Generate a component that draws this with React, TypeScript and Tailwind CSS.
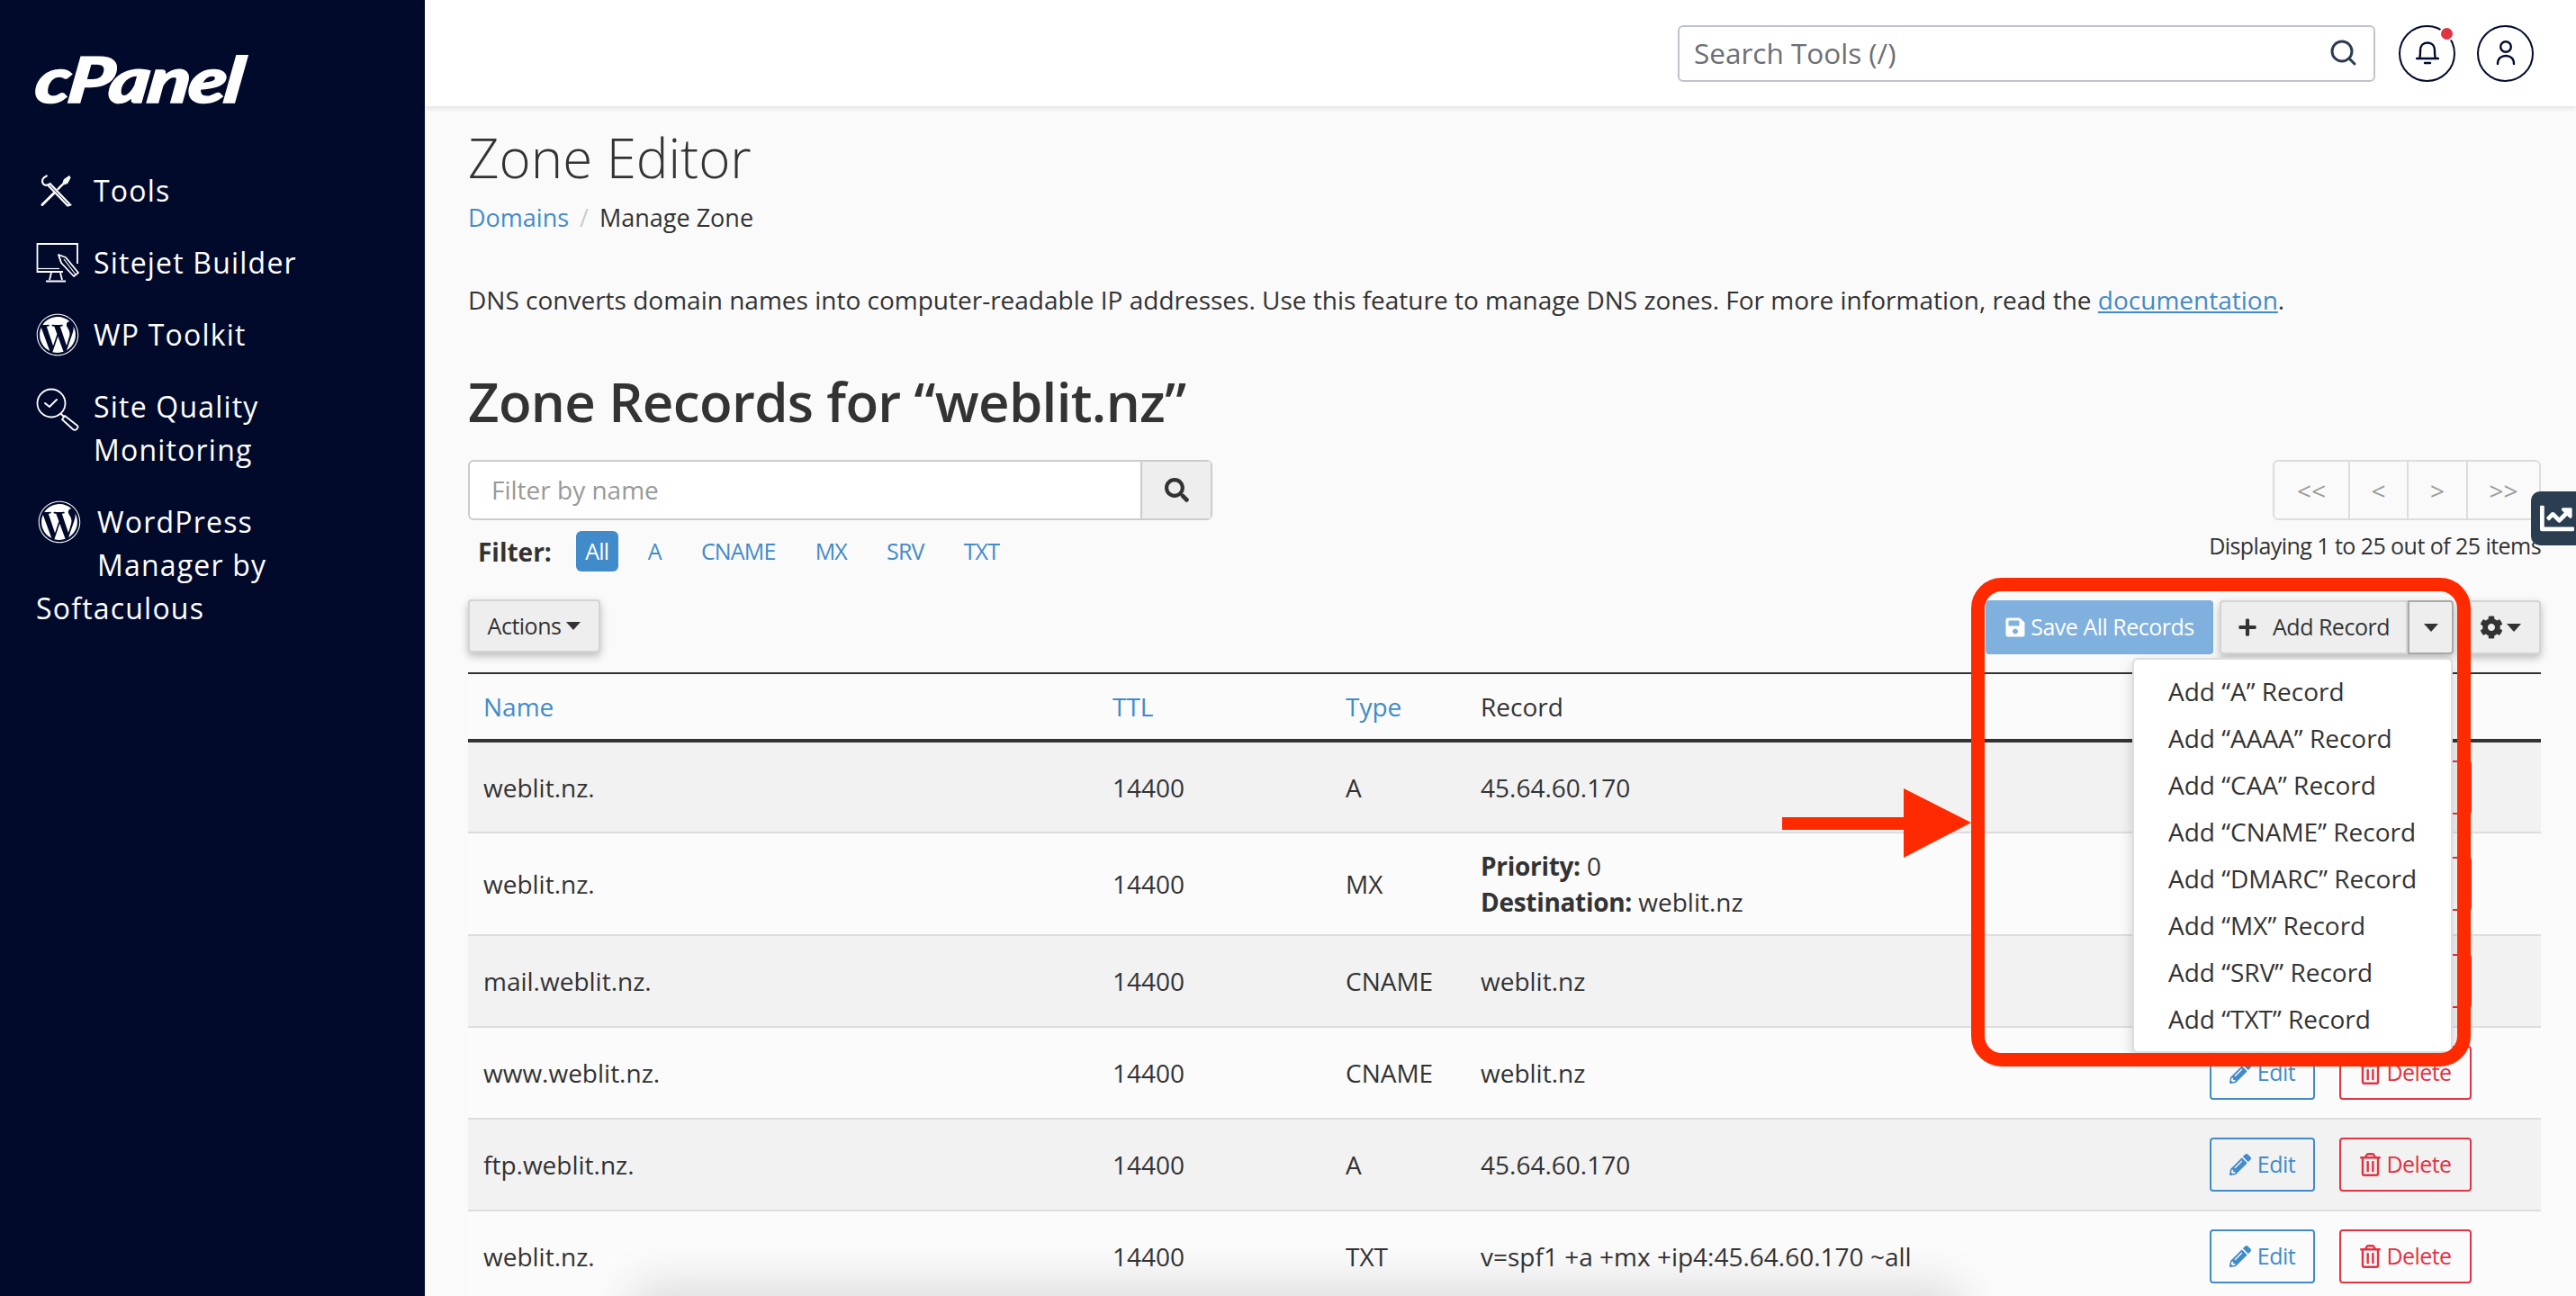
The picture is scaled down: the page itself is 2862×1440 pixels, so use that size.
import { FaChartLine, FaCog, FaPencilAlt, FaPlus, FaRegTrashAlt, FaSave, FaSearch, FaWordpress } from "react-icons/fa"

const records = [
  { name: "weblit.nz.", type: "A", value: "45.64.60.170", rowClass: "h-[101px] bg-[#f2f2f2]" },
  { name: "weblit.nz.", type: "MX", rowClass: "h-[114px] bg-[#fbfbfb]" },
  { name: "mail.weblit.nz.", type: "CNAME", value: "weblit.nz", rowClass: "h-[102px] bg-[#f2f2f2]" },
  { name: "www.weblit.nz.", type: "CNAME", value: "weblit.nz", rowClass: "h-[102px] bg-[#fbfbfb]" },
  { name: "ftp.weblit.nz.", type: "A", value: "45.64.60.170", rowClass: "h-[102px] bg-[#f2f2f2]" },
  { name: "weblit.nz.", type: "TXT", value: "v=spf1 +a +mx +ip4:45.64.60.170 ~all", rowClass: "h-[102px] bg-[#fbfbfb]" },
]

const addOptions = ["A", "AAAA", "CAA", "CNAME", "DMARC", "MX", "SRV", "TXT"]
const filters = ["A", "CNAME", "MX", "SRV", "TXT"]

function Caret() {
  return <span className="h-0 w-0 border-x-[8px] border-t-[9px] border-x-transparent border-t-[#333]" />
}

function ToolsIcon() {
  return (
    <svg viewBox="0 0 36 36" className="h-[36px] w-[36px]" fill="none" stroke="white" strokeWidth="2.6" strokeLinecap="round">
      <path d="M7 1 C2 3 1 7 3 10 C5 12 8 12 11 10 L34 34 L31 35 L9 12" strokeWidth="2.2" />
      <path d="M2 34 L15 21" strokeWidth="3" />
      <path d="M20 16 L25 11" strokeWidth="2.4" />
      <path d="M25 11 L27 5 L33 1 L34 3 L31 9 Z" fill="white" strokeWidth="1" />
    </svg>
  )
}

function MonitorIcon() {
  return (
    <svg viewBox="0 0 48 46" className="h-[46px] w-[48px]" fill="none" stroke="white" strokeWidth="1.8">
      <path d="M46 24 V2 H1.5 V33 H30" />
      <path d="M1.5 29.5 H26" strokeWidth="1.2" />
      <path d="M17 34 L15 42 M27 34 L29 42 M11 43.5 H33" />
      <path d="M25 14 L33 17 L47 34 L42 38 L28 23 Z" strokeLinejoin="round" />
      <path d="M25 14 L28 23 M31 19 L44 36" strokeWidth="1.2" />
    </svg>
  )
}

function QualityIcon() {
  return (
    <svg viewBox="0 0 48 48" className="h-[48px] w-[48px]" fill="none" stroke="white" strokeWidth="1.8" strokeLinecap="round">
      <circle cx="17" cy="17" r="15.5" />
      <path d="M10 17 L15 21 L23 13" strokeWidth="2" />
      <path d="M28 29 L31 32" strokeWidth="2" />
      <path d="M32 31 L46 42 Q47.5 44 45 46 Q43 47.5 41 46 L29 35 Z" strokeLinejoin="round" />
    </svg>
  )
}

function BellIcon() {
  return (
    <svg viewBox="0 0 26 26" className="h-[26px] w-[26px]" fill="none" stroke="#020a2c" strokeWidth="2.4" strokeLinecap="round">
      <path d="M1 19 H25 M4 19 C5 17 5 15 5 10 C5 5 8 1.5 13 1.5 C18 1.5 21 5 21 10 C21 15 21 17 22 19" />
      <path d="M10 24 H16" />
    </svg>
  )
}

function PersonIcon() {
  return (
    <svg viewBox="0 0 22 28" className="h-[28px] w-[22px]" fill="none" stroke="#020a2c" strokeWidth="2.4" strokeLinecap="round">
      <circle cx="11" cy="7" r="5.8" />
      <path d="M2 26 C2 20 6 17 11 17 C16 17 20 20 20 26" />
    </svg>
  )
}

function Sidebar() {
  const itemClass = "flex items-center"
  return (
    <aside className="w-[472px] shrink-0 bg-[#020a2c] pl-[40px] text-[32px] leading-[48px] tracking-[1.2px] text-white">
      <div className="mt-[52px] h-[76px] origin-left -skew-x-6 scale-x-[1.24] font-['Lato',sans-serif] text-[70px] leading-[70px] font-black tracking-[-2px] italic [-webkit-text-stroke:1.5px_white]">cPanel</div>
      <nav className="mt-[60px] flex flex-col gap-[32px]">
        <div className={itemClass}>
          <span className="ml-[5px] mr-[24px] flex w-[35px]"><ToolsIcon /></span>
          Tools
        </div>
        <div className={itemClass}>
          <span className="mr-[16px] flex w-[48px]"><MonitorIcon /></span>
          Sitejet Builder
        </div>
        <div className={itemClass}>
          <span className="mr-[16px] flex w-[48px]"><FaWordpress className="h-[48px] w-[48px]" /></span>
          WP Toolkit
        </div>
        <div className="flex items-start">
          <span className="mr-[16px] mt-[3px] flex w-[48px]"><QualityIcon /></span>
          <span>Site Quality<br />Monitoring</span>
        </div>
        <div>
          <div className="flex items-start">
            <span className="ml-[2px] mr-[18px] flex w-[48px]"><FaWordpress className="h-[48px] w-[48px]" /></span>
            <span>WordPress<br />Manager by</span>
          </div>
          <div>Softaculous</div>
        </div>
      </nav>
    </aside>
  )
}

function TopBar() {
  return (
    <header className="relative z-10 flex h-[118px] shrink-0 items-center justify-end bg-white pr-[47px] shadow-[0_2px_6px_rgba(0,0,0,0.1)]">
      <div className="mr-[26px] flex h-[63px] w-[775px] items-center rounded-[6px] border-2 border-[#c0c2d0] pl-[16px] pr-[18px]">
        <input className="w-full bg-transparent text-[31.5px] outline-none placeholder:text-[#6c6f76]" placeholder="Search Tools (/)" />
        <svg viewBox="0 0 30 30" className="h-[30px] w-[30px] shrink-0" fill="none" stroke="#2b3d50" strokeWidth="3" strokeLinecap="round">
          <circle cx="13" cy="13" r="11" />
          <path d="M21 21 L27 27" />
        </svg>
      </div>
      <div className="relative mr-[24px] flex h-[63px] w-[63px] items-center justify-center rounded-full border-2 border-[#020a2c]">
        <BellIcon />
        <span className="absolute right-[-1px] top-[-1px] h-[17px] w-[17px] rounded-full border-2 border-white bg-[#e03444]" />
      </div>
      <div className="flex h-[63px] w-[63px] items-center justify-center rounded-full border-2 border-[#020a2c]">
        <PersonIcon />
      </div>
    </header>
  )
}

function Toolbar() {
  const greyButton = "flex h-[60px] items-center border-2 border-[#d4d4d4] bg-[#eeeeee] text-[#333]"
  return (
    <div className="mt-[2px] flex items-start justify-between text-[25px] tracking-[-0.5px]">
      <button className="mt-[-1px] flex h-[59px] w-[147px] items-center justify-center gap-[6px] rounded-[4px] border-2 border-[#d4d4d4] bg-[#eeeeee] shadow-[0_4px_10px_rgba(0,0,0,0.25)]">
        Actions
        <Caret />
      </button>
      <div className="flex gap-[7px]">
        <button className="flex h-[60px] w-[253px] items-center justify-center gap-[5px] rounded-[4px] bg-[#7fb0de] text-white">
          <FaSave className="h-[24px] w-[24px]" />
          Save All Records
        </button>
        <div className="relative flex h-[60px] w-[260px] rounded-[4px] shadow-[0_4px_10px_rgba(0,0,0,0.25)]">
          <button className={`${greyButton} w-[209px] justify-center gap-[17px] rounded-l-[4px]`}>
            <FaPlus className="h-[22px] w-[22px]" />
            Add Record
          </button>
          <button className="flex h-[60px] w-[51px] items-center justify-center rounded-r-[4px] border-2 border-[#aaaaaa] bg-[#eeeeee]">
            <Caret />
          </button>
          <ul className="absolute right-[1px] top-[64px] z-10 h-[439px] w-[356px] overflow-hidden rounded-[6px] border-2 border-[#dddddd] bg-white pt-[9px] text-[28px] tracking-normal text-[#333] shadow-[0_6px_14px_rgba(0,0,0,0.18)]">
            {addOptions.map((option) => (
              <li key={option} className="h-[52px] pl-[38px] leading-[52px]">Add “{option}” Record</li>
            ))}
          </ul>
        </div>
        <button className={`${greyButton} w-[90px] justify-center gap-[4px] rounded-[4px] shadow-[0_4px_10px_rgba(0,0,0,0.25)]`}>
          <FaCog className="h-[26px] w-[26px]" />
          <Caret />
        </button>
      </div>
    </div>
  )
}

function RecordRow({ record }: { record: (typeof records)[number] }) {
  return (
    <div className={`flex items-center border-b-2 border-[#dddddd] pl-[17px] pr-[77px] ${record.rowClass}`}>
      <div className="w-[699px]">{record.name}</div>
      <div className="w-[259px]">14400</div>
      <div className="w-[150px]">{record.type}</div>
      <div className="flex-1 leading-[40px]">
        {record.value ?? (
          <>
            <b className="font-bold tracking-[-0.3px]">Priority:</b> 0<br />
            <b className="font-bold tracking-[-0.3px]">Destination:</b> weblit.nz
          </>
        )}
      </div>
      <button className="flex h-[60px] w-[117px] items-center justify-center gap-[7px] rounded-[4px] border-2 border-[#428bca] text-[25px] tracking-[-0.5px] text-[#428bca]">
        <FaPencilAlt className="h-[24px] w-[24px]" />
        Edit
      </button>
      <button className="ml-[27px] flex h-[60px] w-[147px] items-center justify-center gap-[7px] rounded-[4px] border-2 border-[#e03444] text-[25px] tracking-[-0.6px] text-[#e03444]">
        <FaRegTrashAlt className="h-[26px] w-[23px]" />
        Delete
      </button>
    </div>
  )
}

export default function App() {
  return (
    <div className="relative flex h-[1440px] w-[2862px] overflow-hidden bg-[#fafafa] font-['Open_Sans',sans-serif] text-[28px] text-[#333]">
      <Sidebar />
      <div className="flex min-w-0 flex-1 flex-col">
        <TopBar />
        <main className="pl-[48px] pr-[39px]">
          <h1 className="mt-[19px] text-[60px] leading-[76px] font-light">Zone Editor</h1>
          <div className="mt-[9px] flex text-[27px] leading-[40px]">
            <a className="text-[#428bca]">Domains</a>
            <span className="px-[12px] text-[#cccccc]">/</span>
            <span>Manage Zone</span>
          </div>
          <p className="mt-[51px] leading-[40px]">
            DNS converts domain names into computer-readable IP addresses. Use this feature to manage DNS zones. For more information, read the{" "}
            <a className="text-[#428bca] underline">documentation</a>.
          </p>
          <h2 className="mt-[55px] text-[60px] leading-[76px] font-semibold tracking-[-0.65px]">Zone Records for “weblit.nz”</h2>
          <div className="mt-[27px] flex justify-between">
            <div>
              <div className="flex h-[67px] w-[827px] rounded-[6px] border-2 border-[#cccccc] bg-white">
                <input className="min-w-0 flex-1 bg-transparent pl-[24px] pb-[2px] outline-none placeholder:text-[#999999]" placeholder="Filter by name" />
                <span className="flex w-[78px] items-center justify-center border-l-2 border-[#cccccc] bg-[#eeeeee] text-[#333]">
                  <FaSearch className="h-[27px] w-[27px]" />
                </span>
              </div>
              <div className="mt-[12px] flex h-[45px] items-center pl-[11px] text-[25px] tracking-[-0.8px]">
                <b className="mr-[27px] text-[28px] font-bold tracking-normal">Filter:</b>
                <span className="mr-[33px] flex h-[45px] w-[47px] items-center justify-center rounded-[6px] bg-[#428bca] text-white">All</span>
                <div className="flex gap-[44px]">
                  {filters.map((item) => (
                    <a key={item} className="text-[#428bca]">{item}</a>
                  ))}
                </div>
              </div>
            </div>
            <div className="flex flex-col items-end">
              <div className="flex h-[67px] rounded-[6px] border-2 border-[#dddddd] text-[#999999]">
                <span className="flex w-[82px] items-center justify-center">&lt;&lt;</span>
                <span className="flex w-[65px] items-center justify-center border-l-2 border-[#dddddd]">&lt;</span>
                <span className="flex w-[66px] items-center justify-center border-l-2 border-[#dddddd]">&gt;</span>
                <span className="flex w-[81px] items-center justify-center border-l-2 border-[#dddddd]">&gt;&gt;</span>
              </div>
              <div className="mt-[8px] text-[25px] leading-[40px] tracking-[-0.55px]">Displaying 1 to 25 out of 25 items</div>
            </div>
          </div>
          <div className="mt-[32px]"><Toolbar /></div>
          <div className="mt-[20px] border-t-2 border-[#333333] bg-[#fbfbfb]">
            <div className="flex h-[76px] items-center border-b-4 border-[#333333] pl-[17px] font-normal">
              <span className="w-[699px] text-[#428bca]">Name</span>
              <span className="w-[259px] text-[#428bca]">TTL</span>
              <span className="w-[150px] text-[#428bca]">Type</span>
              <span>Record</span>
            </div>
            {records.map((record, i) => (
              <RecordRow key={i} record={record} />
            ))}
          </div>
        </main>
      </div>

      {/* annotation drawn on top of the screenshot */}
      <div className="absolute left-[2190px] top-[642px] z-20 h-[543px] w-[555px] rounded-[34px] border-[15px] border-[#ff2a00]" />
      <svg viewBox="0 0 210 78" className="absolute left-[1980px] top-[876px] z-20 h-[78px] w-[210px]">
        <path d="M0 32 H135 V0 L210 38 L135 77 V46 H0 Z" fill="#ff2a00" />
      </svg>
      <div className="absolute right-0 top-[546px] z-20 flex h-[60px] w-[50px] items-center overflow-hidden rounded-l-[10px] bg-[#2b3d50] pl-[10px] text-white">
        <FaChartLine className="h-[38px] w-[38px] shrink-0" />
      </div>
      <div className="absolute bottom-[-30px] left-[720px] h-[20px] w-[1440px] rounded-full shadow-[0_0_50px_24px_rgba(0,0,0,0.12)]" />
    </div>
  )
}
